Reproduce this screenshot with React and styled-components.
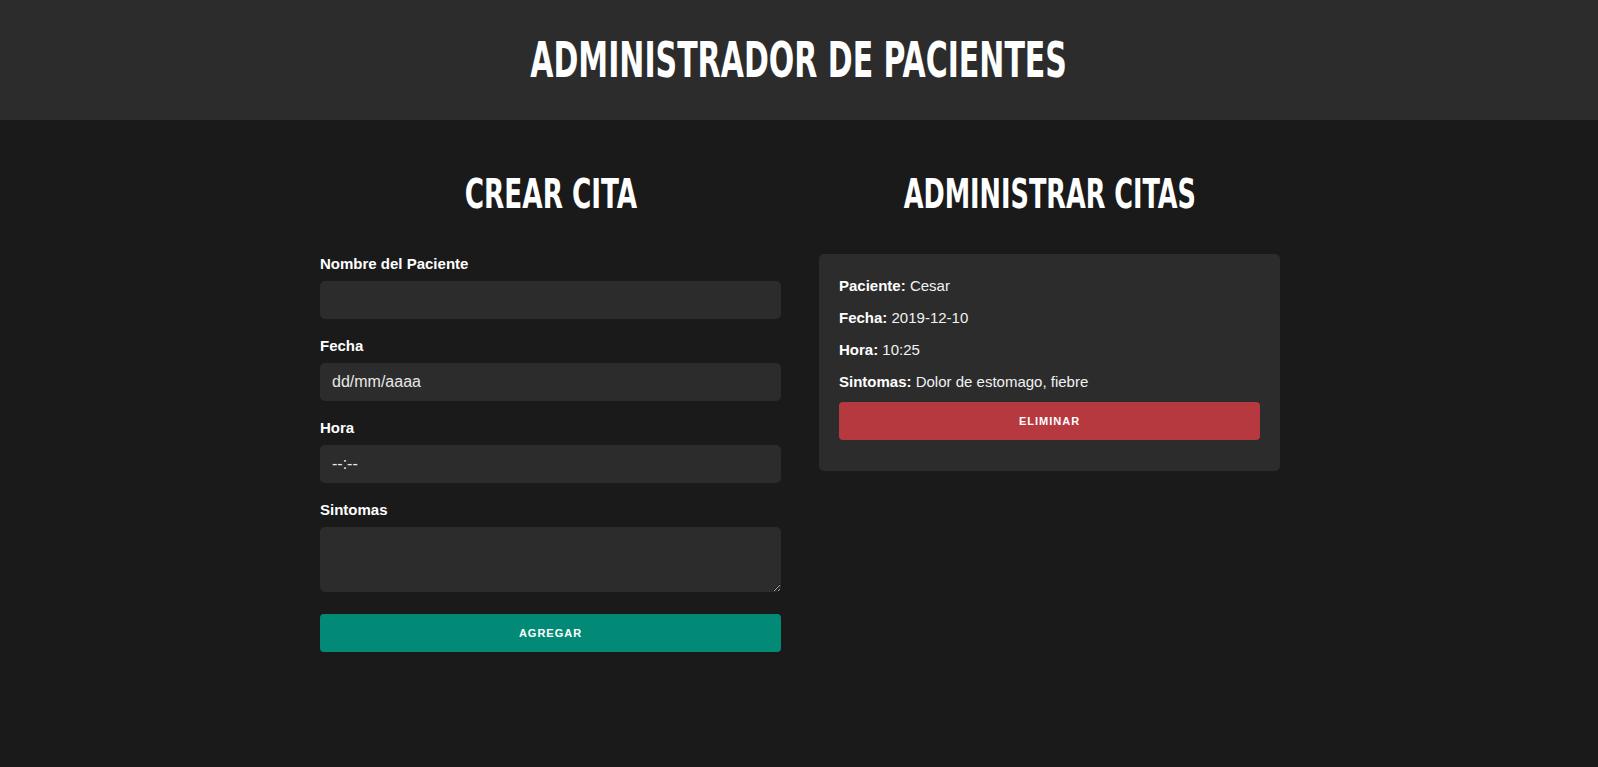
import styled, { createGlobalStyle } from "styled-components";

const GlobalStyle = createGlobalStyle`
  * { box-sizing: border-box; }
  html { font-size: 62.5%; color-scheme: dark; }
  body {
    margin: 0;
    background: #1a1a1a;
    color: #fff;
    font-family: "Liberation Sans", Arial, sans-serif;
  }
`;

const Header = styled.header`
  height: 120px;
  background: #2c2c2c;
  display: flex;
  align-items: center;
  justify-content: center;
`;

// condensed display face: condensed bold squeezed further
const Display = styled.span`
  display: inline-block;
  font-family: "DejaVu Sans Condensed", "Liberation Sans", sans-serif;
  font-weight: 700;
  text-transform: uppercase;
  transform: scaleX(${p => p.$squeeze || 0.72});
  white-space: nowrap;
`;

const Title = styled.h1`
  margin: 0;
  font-size: 49px;
  line-height: 1;
  text-align: center;
`;

const Main = styled.main`
  max-width: 962px;
  margin: 0 auto;
  padding: 54px 0 0 2px;
  display: grid;
  grid-template-columns: 1fr 1fr;
  column-gap: 38px;
`;

const Column = styled.section`
  display: flex;
  flex-direction: column;
`;

const SubTitle = styled.h2`
  margin: 0 0 ${p => p.$after}px;
  font-size: 40px;
  line-height: 1;
  text-align: center;
`;

const Field = styled.div`
  display: flex;
  flex-direction: column;
  margin-bottom: ${p => p.$last ? 22 : 18}px;
`;

const Label = styled.label`
  font-size: 15px;
  line-height: 17px;
  font-weight: 700;
  margin-bottom: 9px;
`;

const Input = styled.input`
  height: 38px;
  border: none;
  border-radius: 5px;
  background: #2c2c2c;
  color: #e8e8e8;
  padding: 0 12px;
  font-family: inherit;
  font-size: 16px;
  outline: none;
  &::placeholder { color: #e8e8e8; opacity: 1; }
`;

const TextArea = styled.textarea`
  height: 65px;
  border: none;
  border-radius: 5px;
  background: #2c2c2c;
  color: #e8e8e8;
  padding: 10px 12px;
  font-family: inherit;
  font-size: 16px;
  outline: none;
`;

const Button = styled.button`
  height: 38px;
  width: 100%;
  border: none;
  border-radius: 4px;
  background: ${p => p.$danger ? "#b5393f" : "#038a76"};
  color: #fff;
  font-family: "Liberation Sans", Arial, sans-serif;
  font-size: 11px;
  font-weight: 700;
  letter-spacing: 1px;
  text-transform: uppercase;
  cursor: pointer;
`;

const Card = styled.div`
  background: #2c2c2c;
  border-radius: 5px;
  padding: 23px 20px 31px;
  display: flex;
  flex-direction: column;
  gap: 14px;
`;

const Line = styled.p`
  margin: 0;
  font-size: 15px;
  line-height: 18px;
  color: #f2f2f2;
  b { color: #fff; }
`;

const Actions = styled.div`
  margin-top: -3px;
`;

const cita = {
  paciente: "Cesar",
  fecha: "2019-12-10",
  hora: "10:25",
  sintomas: "Dolor de estomago, fiebre",
};

export default function App() {
  return (
    <>
      <GlobalStyle />
      <Header>
        <Title><Display $squeeze={0.68}>Administrador de Pacientes</Display></Title>
      </Header>
      <Main>
        <Column>
          <SubTitle $after={41}><Display $squeeze={0.73}>Crear Cita</Display></SubTitle>
          <form onSubmit={e => e.preventDefault()}>
            <Field>
              <Label>Nombre del Paciente</Label>
              <Input type="text" />
            </Field>
            <Field>
              <Label>Fecha</Label>
              <Input type="text" placeholder="dd/mm/aaaa" />
            </Field>
            <Field>
              <Label>Hora</Label>
              <Input type="text" placeholder="--:--" />
            </Field>
            <Field $last>
              <Label>Sintomas</Label>
              <TextArea />
            </Field>
            <Button type="submit">Agregar</Button>
          </form>
        </Column>
        <Column>
          <SubTitle $after={40}><Display $squeeze={0.71}>Administrar Citas</Display></SubTitle>
          <Card>
            <Line><b>Paciente:</b> {cita.paciente}</Line>
            <Line><b>Fecha:</b> {cita.fecha}</Line>
            <Line><b>Hora:</b> {cita.hora}</Line>
            <Line><b>Sintomas:</b> {cita.sintomas}</Line>
            <Actions>
              <Button $danger type="button">Eliminar</Button>
            </Actions>
          </Card>
        </Column>
      </Main>
    </>
  );
}
